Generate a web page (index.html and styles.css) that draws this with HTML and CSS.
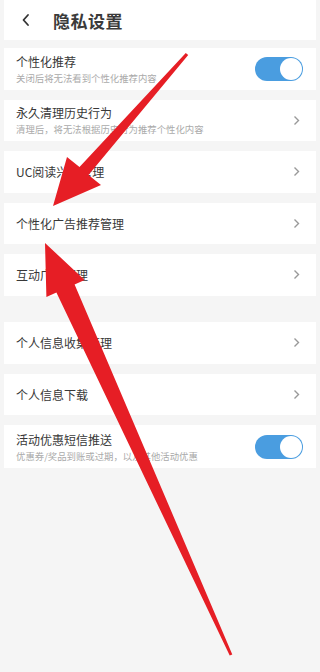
FILE: index.html
```html
<!DOCTYPE html>
<html lang="zh-CN">
<head>
  <meta charset="UTF-8">
  <meta name="viewport" content="width=device-width, initial-scale=1.0">
  <title>隐私设置</title>
  <link rel="stylesheet" href="styles.css">
</head>
<body>
  <div class="page">
    <!-- 顶部标题栏 -->
    <div class="header">
      <svg class="back" width="10" height="14" viewBox="0 0 10 14">
        <polyline points="7,2 2.5,7 7,12" fill="none" stroke="#333" stroke-width="1.8" stroke-linecap="round" stroke-linejoin="round"/>
      </svg>
      <div class="title">隐私设置</div>
    </div>

    <div class="list">
      <div class="row two">
        <div class="text">
          <div class="name">个性化推荐</div>
          <div class="desc">关闭后将无法看到个性化推荐内容</div>
        </div>
        <div class="switch"><span class="knob"></span></div>
      </div>

      <div class="row two">
        <div class="text">
          <div class="name">永久清理历史行为</div>
          <div class="desc">清理后，将无法根据历史行为推荐个性化内容</div>
        </div>
        <svg class="arrow" width="7" height="11" viewBox="0 0 7 11"><polyline points="1.5,1.5 5.5,5.5 1.5,9.5" fill="none" stroke="#999" stroke-width="1.4"/></svg>
      </div>

      <div class="row">
        <div class="name">UC阅读兴趣管理</div>
        <svg class="arrow" width="7" height="11" viewBox="0 0 7 11"><polyline points="1.5,1.5 5.5,5.5 1.5,9.5" fill="none" stroke="#999" stroke-width="1.4"/></svg>
      </div>

      <div class="row">
        <div class="name">个性化广告推荐管理</div>
        <svg class="arrow" width="7" height="11" viewBox="0 0 7 11"><polyline points="1.5,1.5 5.5,5.5 1.5,9.5" fill="none" stroke="#999" stroke-width="1.4"/></svg>
      </div>

      <div class="row">
        <div class="name">互动广告管理</div>
        <svg class="arrow" width="7" height="11" viewBox="0 0 7 11"><polyline points="1.5,1.5 5.5,5.5 1.5,9.5" fill="none" stroke="#999" stroke-width="1.4"/></svg>
      </div>

      <div class="row group">
        <div class="name">个人信息收集管理</div>
        <svg class="arrow" width="7" height="11" viewBox="0 0 7 11"><polyline points="1.5,1.5 5.5,5.5 1.5,9.5" fill="none" stroke="#999" stroke-width="1.4"/></svg>
      </div>

      <div class="row">
        <div class="name">个人信息下载</div>
        <svg class="arrow" width="7" height="11" viewBox="0 0 7 11"><polyline points="1.5,1.5 5.5,5.5 1.5,9.5" fill="none" stroke="#999" stroke-width="1.4"/></svg>
      </div>

      <div class="row two last">
        <div class="text">
          <div class="name">活动优惠短信推送</div>
          <div class="desc">优惠券/奖品到账或过期，以及其他活动优惠</div>
        </div>
        <div class="switch"><span class="knob"></span></div>
      </div>
    </div>

    <!-- 红色标注箭头 -->
    <svg class="marks" width="320" height="672" viewBox="0 0 320 672">
      <polygon fill="#e61e25" points="185.8,52.9 188.2,55.1 88.5,175 101,185 53,206 67,157 79.5,167"/>
      <polygon fill="#e61e25" points="45,243 84.6,279.9 74.6,284.4 232.3,654.4 229.7,655.6 56.4,292.6 46.4,297.1"/>
    </svg>
  </div>
</body>
</html>
```

FILE: styles.css
```css
body {
  margin: 0;
  background: #f5f5f5;
  font-family: "Noto Sans CJK SC", "Noto Sans", sans-serif;
  color: #333;
}
.page {
  position: relative;
  width: 320px;
  height: 672px;
  padding: 0 4px;
  box-sizing: border-box;
  overflow: hidden;
}
/* 顶部 */
.header {
  height: 40px;
  background: #fff;
  display: flex;
  align-items: center;
}
.header .back {
  margin-left: 17px;
  margin-right: 22px;
}
.title {
  font-size: 17px;
  font-weight: bold;
  color: #3a3a3a;
  letter-spacing: 0.5px;
}
.list {
  padding-top: 8px;
}
.row {
  height: 41.5px;
  background: #fff;
  margin-bottom: 10px;
  padding: 0 13px 0 12px;
  display: flex;
  align-items: center;
  justify-content: space-between;
  box-sizing: border-box;
}
.row.group {
  margin-top: 26.5px;
}
.row.last {
  height: 43px;
}
.text {
  display: flex;
  flex-direction: column;
  gap: 3px;
}
.name {
  font-size: 12px;
  line-height: 15px;
  color: #383838;
}
.desc {
  font-size: 9.4px;
  line-height: 12px;
  color: #aaa;
}
.arrow {
  margin-right: 3px;
}
/* 开关 */
.switch {
  width: 48px;
  height: 24px;
  border-radius: 12px;
  background: #4a9de0;
  position: relative;
}
.switch .knob {
  position: absolute;
  right: 1px;
  top: 1px;
  width: 22px;
  height: 22px;
  border-radius: 50%;
  background: #fff;
}
.marks {
  position: absolute;
  left: 0;
  top: 0;
  pointer-events: none;
}
```
